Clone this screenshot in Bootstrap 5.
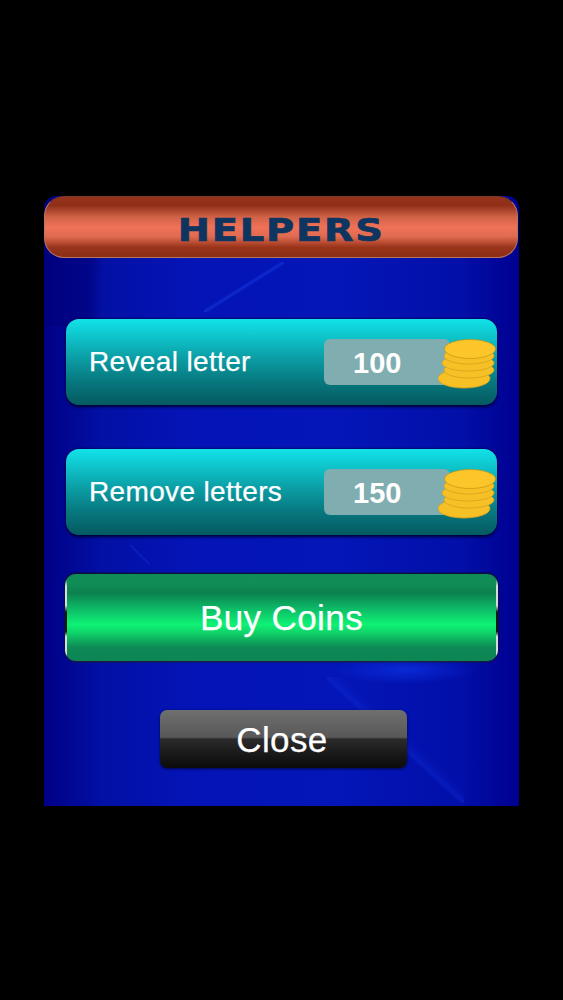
<!DOCTYPE html>
<html lang="en">
<head>
<meta charset="utf-8">
<title>Helpers</title>
<link href="https://cdn.jsdelivr.net/npm/bootstrap@5.3.0/dist/css/bootstrap.min.css" rel="stylesheet">
<style>
html,body{background:#000;height:1000px;overflow:hidden}
body{font-family:"Liberation Sans",Arial,sans-serif;color:#fff;padding:196px 44px 0 44px}
.panel-sheet{width:475px;height:610px;border-radius:12px 12px 0 0;
 background:
  linear-gradient(to bottom right,rgba(25,65,235,0) 47%,rgba(25,65,235,.5) 50%,rgba(25,65,235,0) 53%) 160px 66px/80px 50px no-repeat,
  linear-gradient(to top right,rgba(25,70,235,0) 46%,rgba(25,70,235,.35) 50%,rgba(25,70,235,0) 54%) 86px 349px/20px 20px no-repeat,
  linear-gradient(to top right,rgba(15,45,215,0) 48%,rgba(15,45,215,.4) 50%,rgba(15,45,215,.12) 53%,rgba(15,45,215,0) 56%) 283px 481px/137px 126px no-repeat,
  radial-gradient(ellipse 70px 14px at 360px 474px,rgba(10,45,220,.85),rgba(10,45,220,0)),
  linear-gradient(92deg,rgba(0,0,120,.55) 0,rgba(0,0,120,.55) 10%,rgba(0,0,120,0) 13%) 0 0/100% 130px no-repeat,
  linear-gradient(90deg,#000085 0,#0210a4 12%,#0414b6 30%,#0416b8 62%,#020fa8 88%,#000090 100%);}
.head-bar{height:62px;width:474px;border-radius:20px;border:1px solid #b9765f;border-top-color:#7d3a24;
 background:linear-gradient(180deg,#94331a 0,#8f2f17 14%,#cf6146 33%,#f07258 50%,#e06a50 66%,#98341a 84%,#8c2d15 100%)}
.head-word{font-family:"DejaVu Sans",sans-serif;font-weight:700;font-size:32px;line-height:1;color:#0e3460;letter-spacing:1.5px;padding-top:5px;transform:scaleX(1.2);-webkit-text-stroke:.7px #0e3460}
.offer-row{height:86px;border-radius:13px;padding:0 0 0 23px;box-shadow:0 2px 3px rgba(0,0,30,.85),0 -1px 2px rgba(0,0,60,.5);
 background:linear-gradient(180deg,#12e2e9 0,#0fc8cf 18%,#0b9ea5 45%,#07757c 75%,#055a60 100%)}
.offer-name{font-size:28px;letter-spacing:.35px;line-height:1;margin-top:-1px;-webkit-text-stroke:.25px #fff}
.price-pill{width:126px;height:46px;margin-right:47px;border-radius:6px;background:#7fadb0;font-size:29px;font-weight:700;padding:4px 0 0 29px;position:relative}
.coin-stack{position:absolute;left:114px;top:0;width:60px;height:50px}
.buy-btn{height:87px;border-radius:11px;border:0;color:#fff;font-size:35px;letter-spacing:.4px;line-height:1;padding:0;-webkit-text-stroke:.25px #fff;
 box-shadow:0 -1px 2px #111,0 1px 2px #222;
 background:
  linear-gradient(180deg,transparent 6%,#d5ddd8 14%,#d5ddd8 36%,#0a1a10 44%,#0a1a10 66%,#d5ddd8 72%,#d5ddd8 92%,transparent 97%) left/2px 100% no-repeat,
  linear-gradient(180deg,transparent 6%,#d5ddd8 14%,#d5ddd8 36%,#0a1a10 44%,#0a1a10 66%,#d5ddd8 72%,#d5ddd8 92%,transparent 97%) right/2px 100% no-repeat,
  linear-gradient(180deg,#0f8b57 0,#118e58 10%,#0c8150 22%,#0dbb67 40%,#0ff275 58%,#0fd268 68%,#0d8a56 84%,#0d8554 100%)}
.shut-btn{width:247px;height:58px;border-radius:7px;border:0;color:#fff;font-size:35px;letter-spacing:.4px;line-height:1;padding:0 3px 0 0;-webkit-text-stroke:.25px #fff;
 box-shadow:0 1px 3px rgba(0,0,30,.7);
 background:linear-gradient(180deg,#6f6f6f 0,#585858 47%,#2b2b2b 50%,#161616 80%,#0c0c0c 100%)}
.gap-offer{margin-top:44px}
.gap-first{margin-top:61px}
.gap-buy{margin-top:39px}
.gap-shut{margin-top:49px}
.inner-col{padding:0 22px}
.buy-col{padding:0 21px}
</style>
</head>
<body>
<div class="panel-sheet">
  <div class="head-bar d-flex align-items-center justify-content-center"><span class="head-word">HELPERS</span></div>
  <div class="inner-col">
    <div class="offer-row gap-first d-flex align-items-center justify-content-between">
      <span class="offer-name">Reveal letter</span>
      <div class="price-pill d-flex align-items-center">100
        <svg class="coin-stack" viewBox="0 0 60 50" aria-hidden="true"><g fill="#f8c027" stroke="#d6a31a" stroke-width=".8"><ellipse cx="26" cy="39.5" rx="26" ry="9.5"/><ellipse cx="31" cy="31" rx="25" ry="8"/><ellipse cx="30" cy="24" rx="26" ry="8"/><ellipse cx="31" cy="17" rx="25" ry="8"/></g><ellipse cx="32" cy="10" rx="25.5" ry="9.5" fill="#fcc62a" stroke="#c4930f" stroke-width=".7"/></svg>
      </div>
    </div>
    <div class="offer-row gap-offer d-flex align-items-center justify-content-between">
      <span class="offer-name">Remove letters</span>
      <div class="price-pill d-flex align-items-center">150
        <svg class="coin-stack" viewBox="0 0 60 50" aria-hidden="true"><g fill="#f8c027" stroke="#d6a31a" stroke-width=".8"><ellipse cx="26" cy="39.5" rx="26" ry="9.5"/><ellipse cx="31" cy="31" rx="25" ry="8"/><ellipse cx="30" cy="24" rx="26" ry="8"/><ellipse cx="31" cy="17" rx="25" ry="8"/></g><ellipse cx="32" cy="10" rx="25.5" ry="9.5" fill="#fcc62a" stroke="#c4930f" stroke-width=".7"/></svg>
      </div>
    </div>
  </div>
  <div class="buy-col gap-buy">
    <button type="button" class="btn buy-btn w-100 d-block">Buy Coins</button>
  </div>
  <div class="gap-shut d-flex justify-content-center ps-1">
    <button type="button" class="btn shut-btn">Close</button>
  </div>
</div>
<script src="https://cdn.jsdelivr.net/npm/bootstrap@5.3.0/dist/js/bootstrap.bundle.min.js"></script>
</body>
</html>
